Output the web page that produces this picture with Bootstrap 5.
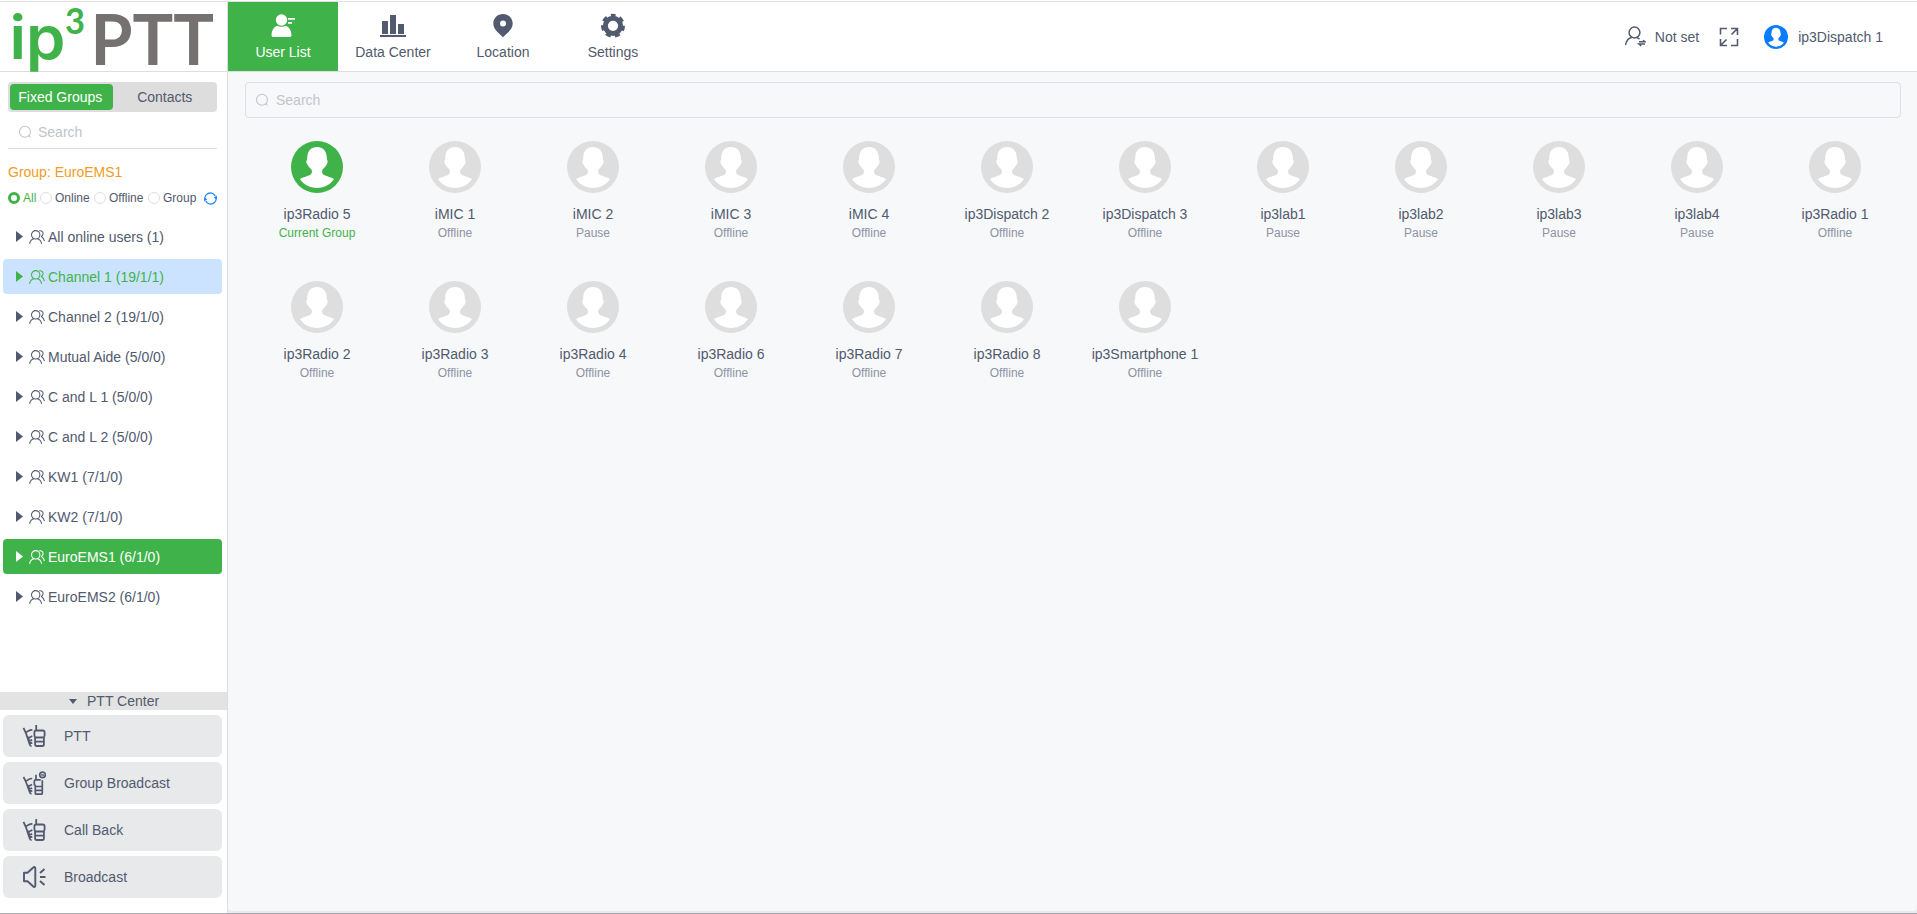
<!DOCTYPE html>
<html lang="en">
<head>
<meta charset="utf-8">
<meta name="viewport" content="width=device-width, initial-scale=1">
<title>ip3 PTT Dispatch</title>
<link href="https://cdn.jsdelivr.net/npm/bootstrap@5.3.0/dist/css/bootstrap.min.css" rel="stylesheet">
<style>
:root{--brand:#3fb34a;--ink:#515a6e;--line:#dcdfe6}
body{font-family:"Liberation Sans",Arial,sans-serif;font-size:14px;line-height:20px;color:var(--ink);background:#fff;height:100vh;overflow:hidden}
svg{display:block;flex:none}
.shell{margin-top:1px;height:calc(100vh - 1px);border-top:1px solid #e1e1e1;border-bottom:1px solid #acacb2}
.topbar{height:70px;border-bottom:1px solid #dedede}
.brandbox{width:228px;border-right:1px solid #dedede}
.brandbox svg{overflow:visible}
.topnav .nav-link{width:110px;height:69px;padding:11px 0 0;color:var(--ink);display:flex;flex-direction:column;align-items:center;gap:4px}
.topnav .nav-link.active{background:var(--brand);color:#fff}
.account{padding-right:34px}
.workspace{min-height:0;background:#e8e9ed}
.sidebar{width:228px;border-right:1px solid #dedede;background:#fff}
.tabs{margin:10px 10px 0 8px;height:30px;padding:2px;background:#ddd;border-radius:4px}
.tabs a{width:103px;height:26px;line-height:26px;text-align:center;color:var(--ink);text-decoration:none;border-radius:4px}
.tabs a.active{background:var(--brand);color:#fff;padding-right:2px}
.tabs a:last-child{padding-left:2px}
.ph{color:#c0c4cc}
.side-search{margin:0 10px 0 8px;height:37px;padding:4px 0 0 10px;gap:6px;border-bottom:1px solid #dcdcdc}
.group-title{margin:13px 0 0 8px;color:#f19c22}
.filters{margin:7px 10px 0 8px;height:18px;font-size:12px;line-height:18px}
.filters .opt{gap:3px}
.ring{width:12px;height:12px;border:1px solid #dcdfe6;border-radius:50%;flex:none}
.opt.on{color:var(--brand)}
.opt.on .ring{border:3px solid var(--brand)}
.tree{margin:12px 5px 0 3px;gap:5px}
.tree a{height:35px;padding-left:13px;color:var(--ink);text-decoration:none;border-radius:4px}
.tree .arrow{margin-right:6px}
.tree .people{margin-right:3px}
.tree .hover{background:#cce3ff;color:var(--brand)}
.tree .sel{background:var(--brand);color:#fff}
.ptt-head{height:18px;line-height:18px;background:#e3e3e3;padding-left:69px;gap:10px}
.ptt-list{padding:5px 5px 15px 3px;gap:5px}
.ptt-list button{height:42px;border:0;border-radius:6px;background:#e8e9eb;color:var(--ink);padding:0 0 0 19px;gap:18px;text-align:left}
.content{min-width:0;background:#f7f8fa;padding:10px 16px 0 17px;margin-bottom:2px;border-radius:0 0 4px 4px}
.main-search{height:36px;border:1px solid var(--line);border-radius:4px;padding:0 0 1px 9px;gap:7px}
.users{display:grid;grid-template-columns:repeat(12,138px);grid-auto-rows:140px;margin:23px 0 0 3px}
.users>div{text-align:center;color:#8c93a3;font-size:12px;line-height:16px}
.users svg{margin:0 auto 12px;color:#dedede}
.users b{display:block;font-weight:400;font-size:14px;line-height:19px;color:var(--ink);margin-bottom:1px}
.users .on,.users .on svg{color:var(--brand)}
</style>
</head>
<body>
<svg width="0" height="0" class="position-absolute" aria-hidden="true">
  <symbol id="avatar" viewBox="0 0 52 52"><circle cx="26" cy="26" r="26" fill="currentColor"/><path fill="#fff" d="M26 6C32 6 35.500 10 35.700 16L36 19C37 19.500 36.800 21.500 36 23C35 24.500 34 26.500 31.500 28.500C30.500 31 31 33 33.500 34.200C36.500 35.500 40 36 43 38C39.500 43.500 33.500 47 26 47S12.500 43.500 9 38C12 36 15.500 35.500 18.500 34.200C21 33 21.500 31 20.500 28.500C18 26.500 17 24.500 16 23C15.200 21.500 15 19.500 16 19L16.300 16C16.500 10 20 6 26 6z"/></symbol>
  <symbol id="search" viewBox="0 0 14 14"><g fill="none" stroke="currentColor" stroke-width="1.100"><circle cx="7" cy="6.700" r="5.500"/><path d="M10.500 10.300l2 2.200"/></g></symbol>
  <symbol id="people" viewBox="0 0 16 14"><g fill="none" stroke="currentColor" stroke-width="1.050"><circle cx="6.700" cy="4.800" r="4.200"/><path d="M.6 13.800c.5-3 2.300-4.800 4.400-5.100M8.300 8.700c2.200.4 3.800 2.100 4.300 5.100M10.200.8c2.400-.5 4 1 3.900 2.900-.1 1.600-1 2.500-2.200 2.900M12.500 6.800c1.600.8 2.600 2.200 2.900 4.300"/></g></symbol>
  <symbol id="arrow" viewBox="0 0 7 11"><path fill="currentColor" d="M0 0l7 5.500L0 11z"/></symbol>
  <symbol id="radio" viewBox="0 0 24 24"><g fill="none" stroke="currentColor" stroke-width="1.800" stroke-linejoin="round"><path d="M14.200 1v5.500M14.200 6.500h6.500c1.200 0 1.900.6 1.900 1.700v3.300l-.7 1.800v7c0 1-.6 1.700-1.600 1.700h-5.600c-1 0-1.600-.7-1.600-1.700v-7l-.7-1.800V8.200c0-1.100.6-1.700 1.800-1.700M13.100 13.500h8.800M13.100 17.700h8.800"/><path d="M1.500 3.800l2.300 5 4 12c.3.800 1 1.200 1.800 1M3.200 8c1.600.4 2.500-.5 3.500-1.300 1.100-.8 2.300-.9 3.700-.9M4.500 11.500l2 2.500 3.800-2M6.500 14l.7 3 3-1.200M7.200 17l.7 2.700 2.400-1"/></g></symbol>
  <symbol id="radion" viewBox="0 0 24 24"><g fill="none" stroke="currentColor" stroke-width="1.700" stroke-linejoin="round"><path d="M14 3.800v5M20.300 9.300v13c0 .6-.3.900-.9.900h-5.200c-.6 0-.9-.3-.9-.9v-7.500l-1-1.500v-3c0-.9.500-1.500 1.400-1.500h5M13.300 15.500h7M13.300 19.300h7"/><path d="M1.500 6l2.300 4.500 4 11c.3.800 1 1.200 1.800 1M3.200 9.700c1.600.4 2.500-.5 3.500-1.300 1.100-.8 2.300-.9 3.500-.9M4.500 13l2 2.300 3.600-1.900M6.500 15.300l.7 2.700 3-1M7.200 18l.7 2.500 2.400-.9"/><circle cx="20.500" cy="3.800" r="2.800" stroke-width="1.600"/><path stroke-width=".8" d="M19.700 5V2.700L21.300 5V2.700"/></g></symbol>
</svg>

<div class="shell d-flex flex-column">
  <header class="topbar d-flex flex-shrink-0">
    <div class="brandbox">
      <svg width="227" height="69" viewBox="0 2 227 69" font-family="Lato, sans-serif" font-weight="700">
        <text x="9.500" y="59" font-size="60" fill="#3fb34a" font-family="Inter, sans-serif" font-weight="600" textLength="56" lengthAdjust="spacingAndGlyphs">ip</text>
        <text x="65" y="34" font-size="37" fill="#3fb34a" textLength="20" lengthAdjust="spacingAndGlyphs">3</text>
        <text x="90.500" y="65" font-size="70" fill="#767171" textLength="123.500" lengthAdjust="spacingAndGlyphs">PTT</text>
      </svg>
    </div>
    <nav class="topnav nav flex-nowrap">
      <a class="nav-link active" href="#"><svg width="26" height="25" viewBox="0 0 26 25" fill="currentColor"><circle cx="11.500" cy="7" r="5.700"/><path d="M1.500 22.200c.3-6 2.700-8.400 6-9.500 2 1.400 6 1.400 8 0 3.300 1.100 5.700 3.500 6 9.500 0 1.200-.8 1.800-2 1.800h-16c-1.200 0-2-.6-2-1.800zM18 5h7v1.800h-7zM18 9h4v1.800h-4z"/></svg>User List</a>
      <a class="nav-link" href="#"><svg width="26" height="25" viewBox="0 0 26 25" fill="currentColor"><path d="M2 8h6v13H2zM10 2h6v19h-6zM18 11h6v10h-6zM0 22h26v2H0z"/></svg>Data Center</a>
      <a class="nav-link" href="#"><svg width="26" height="25" viewBox="0 0 26 25" fill="currentColor"><path fill-rule="evenodd" d="M13 1c5.500 0 9.700 4.200 9.700 9.500 0 5-4 8.500-9.700 13.700C7.300 19 3.300 15.500 3.300 10.500 3.300 5.200 7.500 1 13 1zm0 6.600a3 3 0 100 6 3 3 0 000-6z"/></svg>Location</a>
      <a class="nav-link" href="#"><svg width="26" height="25" viewBox="0 0 26 25"><g fill="none" stroke="currentColor"><circle cx="13" cy="12.800" r="7.600" stroke-width="5"/><circle cx="13" cy="12.800" r="10.600" stroke-width="2.800" stroke-dasharray="5.200 4.314" stroke-dashoffset="2.600" transform="rotate(-90 13 12.800)"/></g></svg>Settings</a>
    </nav>
    <div class="account ms-auto d-flex align-items-center">
      <svg width="21" height="21" viewBox="0 0 21 21" fill="none" stroke="currentColor" stroke-width="1.500"><circle cx="9.500" cy="6.500" r="5.400"/><path d="M.5 19.200c.8-4.700 3-7 6.200-7.700M11.500 11.600c1.200.3 2.200.8 3 1.500M14 15.800h6l-2-1.500M20 18.100h-6l2.200 1.700"/></svg>
      <span style="margin-left:9px">Not set</span>
      <svg width="20" height="20" viewBox="0 0 20 20" fill="none" stroke="currentColor" stroke-width="1.600" style="margin-left:20px"><path d="M1.500 7.500v-6H8M12 1.500h6.500V8M18.500 12v6.500H12M8 18.500H1.500V12M18 2l-5.500 5.500M2 18l5.500-5.500"/></svg>
      <svg width="24" height="24" style="margin-left:25px;color:#0a7cff"><use href="#avatar"/></svg>
      <span style="margin-left:10px">ip3Dispatch 1</span>
    </div>
  </header>

  <div class="workspace d-flex flex-grow-1">
    <aside class="sidebar d-flex flex-column flex-shrink-0">
      <div class="tabs d-flex"><a class="active" href="#">Fixed Groups</a><a href="#">Contacts</a></div>
      <div class="side-search ph d-flex align-items-center"><svg width="14" height="14"><use href="#search"/></svg>Search</div>
      <div class="group-title">Group: EuroEMS1</div>
      <div class="filters d-flex align-items-center">
        <span class="opt on d-flex align-items-center" style="width:32px"><i class="ring"></i>All</span>
        <span class="opt d-flex align-items-center" style="width:54px"><i class="ring"></i>Online</span>
        <span class="opt d-flex align-items-center" style="width:54px"><i class="ring"></i>Offline</span>
        <span class="opt d-flex align-items-center"><i class="ring"></i>Group</span>
        <svg class="ms-auto" width="13" height="13" viewBox="0 0 13 13" fill="none" stroke="#1a84ff" stroke-width="1.300"><path d="M1.200 8A5.400 5.400 0 0111.200 4M11.800 5A5.400 5.400 0 011.800 9"/><path fill="#1a84ff" stroke="none" d="M12.900 3.600v3.600L9.600 5.800zM.1 9.400V5.800l3.300 1.400z"/></svg>
      </div>
      <nav class="tree d-flex flex-column">
        <a class="d-flex align-items-center" href="#"><svg class="arrow" width="7" height="11"><use href="#arrow"/></svg><svg class="people" width="16" height="14"><use href="#people"/></svg>All online users (1)</a>
        <a class="hover d-flex align-items-center" href="#"><svg class="arrow" width="7" height="11"><use href="#arrow"/></svg><svg class="people" width="16" height="14"><use href="#people"/></svg>Channel 1 (19/1/1)</a>
        <a class="d-flex align-items-center" href="#"><svg class="arrow" width="7" height="11"><use href="#arrow"/></svg><svg class="people" width="16" height="14"><use href="#people"/></svg>Channel 2 (19/1/0)</a>
        <a class="d-flex align-items-center" href="#"><svg class="arrow" width="7" height="11"><use href="#arrow"/></svg><svg class="people" width="16" height="14"><use href="#people"/></svg>Mutual Aide (5/0/0)</a>
        <a class="d-flex align-items-center" href="#"><svg class="arrow" width="7" height="11"><use href="#arrow"/></svg><svg class="people" width="16" height="14"><use href="#people"/></svg>C and L 1 (5/0/0)</a>
        <a class="d-flex align-items-center" href="#"><svg class="arrow" width="7" height="11"><use href="#arrow"/></svg><svg class="people" width="16" height="14"><use href="#people"/></svg>C and L 2 (5/0/0)</a>
        <a class="d-flex align-items-center" href="#"><svg class="arrow" width="7" height="11"><use href="#arrow"/></svg><svg class="people" width="16" height="14"><use href="#people"/></svg>KW1 (7/1/0)</a>
        <a class="d-flex align-items-center" href="#"><svg class="arrow" width="7" height="11"><use href="#arrow"/></svg><svg class="people" width="16" height="14"><use href="#people"/></svg>KW2 (7/1/0)</a>
        <a class="sel d-flex align-items-center" href="#"><svg class="arrow" width="7" height="11"><use href="#arrow"/></svg><svg class="people" width="16" height="14"><use href="#people"/></svg>EuroEMS1 (6/1/0)</a>
        <a class="d-flex align-items-center" href="#"><svg class="arrow" width="7" height="11"><use href="#arrow"/></svg><svg class="people" width="16" height="14"><use href="#people"/></svg>EuroEMS2 (6/1/0)</a>
      </nav>
      <div class="ptt-head d-flex align-items-center mt-auto"><svg width="8" height="5" viewBox="0 0 8 5"><path fill="currentColor" d="M0 0h8L4 5z"/></svg>PTT Center</div>
      <div class="ptt-list d-flex flex-column">
        <button class="d-flex align-items-center"><svg width="24" height="24"><use href="#radio"/></svg>PTT</button>
        <button class="d-flex align-items-center"><svg width="24" height="24"><use href="#radion"/></svg>Group Broadcast</button>
        <button class="d-flex align-items-center"><svg width="24" height="24"><use href="#radio"/></svg>Call Back</button>
        <button class="d-flex align-items-center"><svg width="24" height="24" viewBox="0 0 24 24" fill="none" stroke="currentColor" stroke-width="1.900" stroke-linejoin="round"><path d="M2 7.800h3.500L11.300 2.500c1-.8 2-.4 2 .8v17.400c0 1.200-1 1.600-2 .8l-5.800-5.300H2zM18 12h5.500M18 8l4.500-4M18 16l4.500 4"/></svg>Broadcast</button>
      </div>
    </aside>

    <main class="content flex-grow-1">
      <div class="main-search ph d-flex align-items-center"><svg width="14" height="14"><use href="#search"/></svg>Search</div>
      <div class="users">
        <div class="on"><svg width="52" height="52"><use href="#avatar"/></svg><b>ip3Radio 5</b>Current Group</div>
        <div><svg width="52" height="52"><use href="#avatar"/></svg><b>iMIC 1</b>Offline</div>
        <div><svg width="52" height="52"><use href="#avatar"/></svg><b>iMIC 2</b>Pause</div>
        <div><svg width="52" height="52"><use href="#avatar"/></svg><b>iMIC 3</b>Offline</div>
        <div><svg width="52" height="52"><use href="#avatar"/></svg><b>iMIC 4</b>Offline</div>
        <div><svg width="52" height="52"><use href="#avatar"/></svg><b>ip3Dispatch 2</b>Offline</div>
        <div><svg width="52" height="52"><use href="#avatar"/></svg><b>ip3Dispatch 3</b>Offline</div>
        <div><svg width="52" height="52"><use href="#avatar"/></svg><b>ip3lab1</b>Pause</div>
        <div><svg width="52" height="52"><use href="#avatar"/></svg><b>ip3lab2</b>Pause</div>
        <div><svg width="52" height="52"><use href="#avatar"/></svg><b>ip3lab3</b>Pause</div>
        <div><svg width="52" height="52"><use href="#avatar"/></svg><b>ip3lab4</b>Pause</div>
        <div><svg width="52" height="52"><use href="#avatar"/></svg><b>ip3Radio 1</b>Offline</div>
        <div><svg width="52" height="52"><use href="#avatar"/></svg><b>ip3Radio 2</b>Offline</div>
        <div><svg width="52" height="52"><use href="#avatar"/></svg><b>ip3Radio 3</b>Offline</div>
        <div><svg width="52" height="52"><use href="#avatar"/></svg><b>ip3Radio 4</b>Offline</div>
        <div><svg width="52" height="52"><use href="#avatar"/></svg><b>ip3Radio 6</b>Offline</div>
        <div><svg width="52" height="52"><use href="#avatar"/></svg><b>ip3Radio 7</b>Offline</div>
        <div><svg width="52" height="52"><use href="#avatar"/></svg><b>ip3Radio 8</b>Offline</div>
        <div><svg width="52" height="52"><use href="#avatar"/></svg><b>ip3Smartphone 1</b>Offline</div>
      </div>
    </main>
  </div>
</div>
<script src="https://cdn.jsdelivr.net/npm/bootstrap@5.3.0/dist/js/bootstrap.bundle.min.js"></script>
</body>
</html>
